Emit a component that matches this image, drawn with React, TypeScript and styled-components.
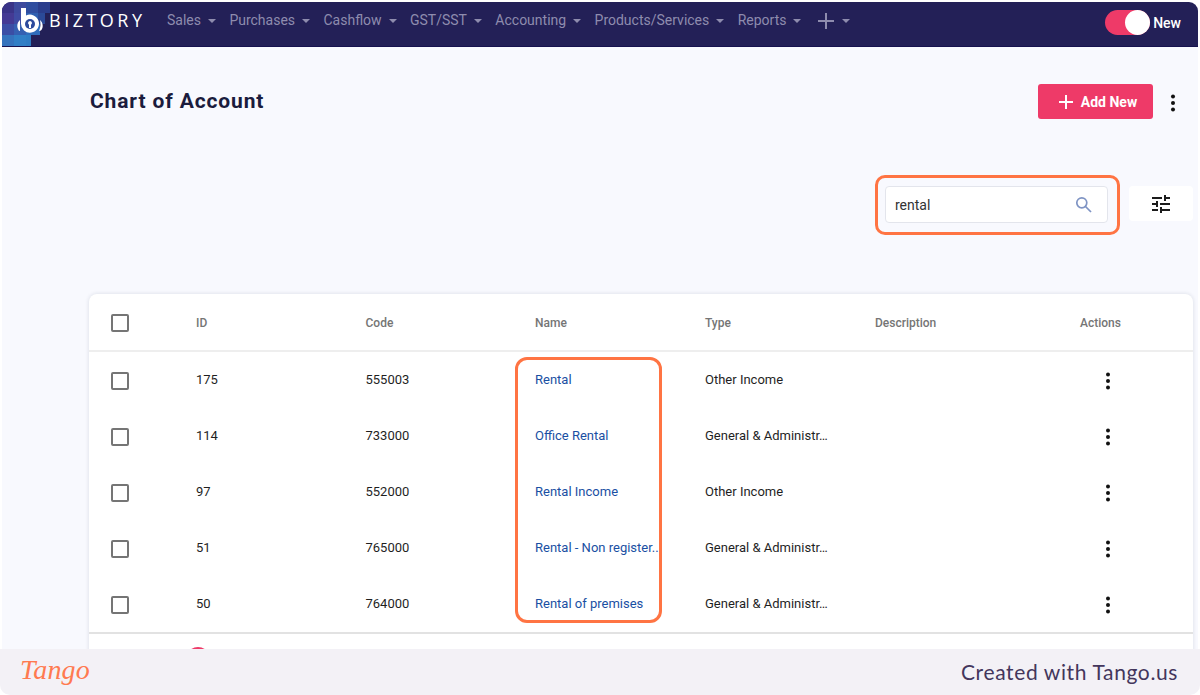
import React from "react";
import styled, { createGlobalStyle } from "styled-components";

const Global = createGlobalStyle`
  html, body { margin: 0; padding: 0; background: #fff; }
  body { font-family: Roboto, "Liberation Sans", sans-serif; }
  * { box-sizing: border-box; }
`;

const Page = styled.div`
  width: 1200px; height: 695px; overflow: hidden; background: #fff;
  display: flex; flex-direction: column; padding: 2px 2px 0;
`;
const Frame = styled.div`
  flex: 1; min-height: 0; display: flex; flex-direction: column; overflow: hidden;
  border-radius: 9px 9px 0 0; background: #f8f9fe;
`;
const Footer = styled.footer`
  height: 46px; flex: none; margin: 0 -2px 0; background: #f3f1f6; border-radius: 0 0 10px 10px;
  display: flex; align-items: center; justify-content: space-between; padding: 0 22px 2px 20px;
`;
const TangoMark = styled.span`
  font-family: "Liberation Serif", serif; font-style: italic; font-size: 28px; color: #ff7a50;
  letter-spacing: 0.2px; line-height: 1; margin-top: -2px; font-weight: 400;
`;
const Credit = styled.span`
  font-family: Lato, sans-serif; font-size: 21px; letter-spacing: 0.62px; color: #43365c;
`;
const Nav = styled.nav`
  position: relative; height: 45px; flex: none; background: #232057; border-bottom: 1px solid #16124f;
  display: flex; align-items: center; overflow: hidden;
`;
const Brand = styled.div`
  position: relative; width: 165px; flex: none; height: 100%; display: flex; align-items: center; padding-left: 47px;
  margin-top: -9px;
`;
const BrandName = styled.span`
  font-family: "Open Sans", sans-serif; font-size: 18px; font-weight: 500; color: #fff; letter-spacing: 3.5px;
`;
const Mosaic = styled.svg`
  position: absolute; left: 0; top: 0; width: 50px; height: 45px;
`;
const Logo = styled.svg`
  position: absolute; left: 15px; top: 6px; width: 26px; height: 25px;
`;
const Menu = styled.div`
  display: flex; align-items: center; gap: 13.4px; margin-top: -8px; flex: 1;
`;
const MenuItem = styled.span`
  display: flex; align-items: center; gap: 7px; font-size: 14px; color: #8e8cae;
`;
const Caret = styled.i`
  width: 0; height: 0; border-left: 4px solid transparent; border-right: 4px solid transparent;
  border-top: 4px solid #8e8cae; display: block; margin-top: 1px;
`;
const PlusIcon = styled.svg`
  width: 18px; height: 18px; display: block; margin: 2px 0 0 2px;
`;
const ToggleWrap = styled.div`
  display: flex; align-items: center; gap: 3px; padding-right: 17px; margin-top: -3px;
`;
const Track = styled.div`
  width: 45px; height: 25px; border-radius: 13px; background: #ee3a68; display: flex; justify-content: flex-end;
`;
const Knob = styled.div`
  width: 25px; height: 25px; border-radius: 50%; background: #fff;
`;
const ToggleLabel = styled.span`
  color: #fff; font-size: 14px; font-weight: 500;
`;
const Main = styled.main`
  flex: 1; min-height: 0; overflow: hidden; padding: 37px 5px 0 87px;
`;
const Head = styled.div`
  display: flex; align-items: center; justify-content: space-between; height: 35px; padding-right: 12px;
`;
const Title = styled.h1`
  margin: -2px 0 0 1px; font-size: 21px; font-weight: 700; color: #1b1c3d; letter-spacing: 0.87px;
`;
const HeadActions = styled.div`
  display: flex; align-items: center; gap: 12px;
`;
const AddButton = styled.button`
  width: 115px; height: 35px; border: none; border-radius: 3px; background: #ee3a68; color: #fff;
  display: flex; align-items: center; justify-content: center; gap: 7px; font: 700 14px Roboto, sans-serif;
  padding: 0 0 0 4px;
`;
const Kebab = styled.svg`
  width: 16px; height: 20px; display: block; flex: none; color: #111; margin-top: 2px;
`;
const SearchRow = styled.div`
  display: flex; justify-content: flex-end; align-items: flex-start; gap: 21px; margin-top: 67px;
`;
const SearchBox = styled.div`
  position: relative; width: 223px; height: 37px; background: #fff; border: 1px solid #e3e5ec; border-radius: 4px;
  display: flex; align-items: center; justify-content: space-between; padding: 0 15px 0 9px;
  font-size: 14px; color: #333;
`;
const Highlight = styled.div`
  position: absolute; left: -11px; top: -12px; width: 245px; height: 60px; border: 3px solid #ff7443; border-radius: 10px;
`;
const FilterButton = styled.div`
  width: 64px; height: 35px; background: #fff; border-radius: 4px; display: flex; align-items: center; justify-content: center;
`;
const Card = styled.section`
  position: relative; margin-top: 71px; background: #fff; border-radius: 8px 8px 0 0;
  box-shadow: 0 0 4px rgba(30, 40, 80, 0.14);
`;
const columns = "107px 169.5px 169.5px 170px 170px 170px 148px";
const HeadRow = styled.div`
  display: grid; grid-template-columns: ${columns}; height: 58px; align-items: center; padding-top: 2px;
  border-bottom: 2px solid #eeeeee; font-size: 12px; font-weight: 500; color: #757575;
`;
const Row = styled.div`
  display: grid; grid-template-columns: ${columns}; height: 56px; align-items: center;
  font-size: 13px; color: #1f1f1f; padding-bottom: 1px;
`;
const CheckCell = styled.div`
  padding-left: 22px; display: flex;
`;
const RowCheckCell = styled(CheckCell)`
  padding-top: 2px;
`;
const Check = styled.span`
  width: 18px; height: 18px; border: 2px solid #757575; border-radius: 2px; display: block; background: #fff;
`;
const Link = styled.span`
  color: #1a4fa3; white-space: nowrap; display: block;
`;
const Clip = styled.span`
  display: block; white-space: nowrap;
`;
const ActionHead = styled.div`
  padding-left: 35px;
`;
const ActionCell = styled.div`
  padding: 2px 0 0 55px; display: flex;
`;
const RowKebab = styled.svg`
  width: 16px; height: 20px; display: block; color: #111;
`;
const NameCol = styled.div`
  position: absolute; left: 426px; top: 63px; width: 147px; height: 266px; border: 3px solid #ff7443; border-radius: 12px;
  pointer-events: none;
`;
const Bottom = styled.div`
  height: 60px; border-top: 2px solid #e2e2e2; padding: 13px 0 0 97px;
`;
const PinkDot = styled.div`
  width: 24px; height: 24px; border-radius: 50%; background: #ee3a68;
`;

const rows = [
  { id: "175", code: "555003", name: "Rental", type: "Other Income" },
  { id: "114", code: "733000", name: "Office Rental", type: "General & Administr…" },
  { id: "97", code: "552000", name: "Rental Income", type: "Other Income" },
  { id: "51", code: "765000", name: "Rental - Non register..", type: "General & Administr…" },
  { id: "50", code: "764000", name: "Rental of premises", type: "General & Administr…" },
];

const mosaic: [number, number, number, string][] = [
  [0, 0, 12, "#3a3488"], [12, 0, 12, "#3d4a9e"], [24, 0, 12, "#2f4d9f"], [36, 0, 12, "#2a3d8c"],
  [0, 11, 12, "#443a94"], [12, 11, 12, "#3f4ba3"], [24, 11, 12, "#2f5fb0"], [36, 11, 7, "#2b4a98"],
  [0, 22, 12, "#3b4ea5"], [12, 22, 12, "#3560b2"], [24, 22, 14, "#2f6dbb"],
  [0, 33, 12, "#3573bd"], [12, 33, 12, "#317fc6"], [24, 33, 5, "#2e7cc4"],
];

const Dots = () => (
  <>
    <circle cx="8" cy="3.5" r="2" fill="currentColor" />
    <circle cx="8" cy="10" r="2" fill="currentColor" />
    <circle cx="8" cy="16.5" r="2" fill="currentColor" />
  </>
);

export default function App() {
  return (
    <Page>
      <Global />
      <Frame>
        <Nav>
          <Mosaic viewBox="0 0 50 45">
            {mosaic.map(([x, y, w, c]) => (
              <rect key={`${x}-${y}`} x={x} y={y} width={w} height="11" fill={c} />
            ))}
          </Mosaic>
          <Logo viewBox="0 0 26 25">
            <path d="M1 21c-1.500-3-.5-7 2-9v11c-1 0-1.500-.8-2-2zM23 12c2.500 2 3.500 6 2 9-.5 1.300-1.500 2-3 2 1.600-3.500 1.800-7.500 1-11z" fill="#fff" />
            <path d="M4 0h5v7.600A9 9 0 1 1 4 15.500z" fill="#fff" />
            <circle cx="13" cy="16" r="5" fill="#2c4a9c" />
            <path d="M13 13a2 2 0 0 1 1 3.700V20h-2v-3.300A2 2 0 0 1 13 13z" fill="#fff" />
          </Logo>
          <Brand><BrandName>BIZTORY</BrandName></Brand>
          <Menu>
            {["Sales", "Purchases", "Cashflow", "GST/SST", "Accounting", "Products/Services", "Reports"].map((m) => (
              <MenuItem key={m}>{m}<Caret /></MenuItem>
            ))}
            <MenuItem>
              <PlusIcon viewBox="0 0 18 18"><path d="M9 1v16M1 9h16" stroke="#8e8cae" strokeWidth="2" /></PlusIcon>
              <Caret />
            </MenuItem>
          </Menu>
          <ToggleWrap>
            <Track><Knob /></Track>
            <ToggleLabel>New</ToggleLabel>
          </ToggleWrap>
        </Nav>
        <Main>
          <Head>
            <Title>Chart of Account</Title>
            <HeadActions>
              <AddButton>
                <svg width="16" height="16" viewBox="0 0 16 16"><path d="M8 1v14M1 8h14" stroke="#fff" strokeWidth="2" /></svg>
                Add New
              </AddButton>
              <Kebab viewBox="0 0 16 20"><Dots /></Kebab>
            </HeadActions>
          </Head>
          <SearchRow>
            <SearchBox>
              rental
              <svg width="17" height="17" viewBox="0 0 17 17" fill="none" stroke="#7f94c4" strokeWidth="1.7">
                <circle cx="6.800" cy="6.800" r="5" /><path d="M10.500 10.500L16 16" />
              </svg>
              <Highlight />
            </SearchBox>
            <FilterButton>
              <svg width="24" height="24" viewBox="0 0 24 24" fill="#1c1c1c">
                <path d="M3 17v2h6v-2H3zM3 5v2h10V5H3zm10 16v-2h8v-2h-8v-2h-2v6h2zM7 9v2H3v2h4v2h2V9H7zm14 4v-2H11v2h10zm-6-4h2V7h4V5h-4V3h-2v6z" />
              </svg>
            </FilterButton>
          </SearchRow>
          <Card>
            <HeadRow>
              <CheckCell><Check /></CheckCell>
              <div>ID</div><div>Code</div><div>Name</div><div>Type</div><div>Description</div>
              <ActionHead>Actions</ActionHead>
            </HeadRow>
            {rows.map((r) => (
              <Row key={r.id}>
                <RowCheckCell><Check /></RowCheckCell>
                <div>{r.id}</div>
                <div>{r.code}</div>
                <div><Link>{r.name}</Link></div>
                <div><Clip>{r.type}</Clip></div>
                <div />
                <ActionCell><RowKebab viewBox="0 0 16 20"><Dots /></RowKebab></ActionCell>
              </Row>
            ))}
            <Bottom><PinkDot /></Bottom>
            <NameCol />
          </Card>
        </Main>
      </Frame>
      <Footer>
        <TangoMark>Tango</TangoMark>
        <Credit>Created with Tango.us</Credit>
      </Footer>
    </Page>
  );
}
